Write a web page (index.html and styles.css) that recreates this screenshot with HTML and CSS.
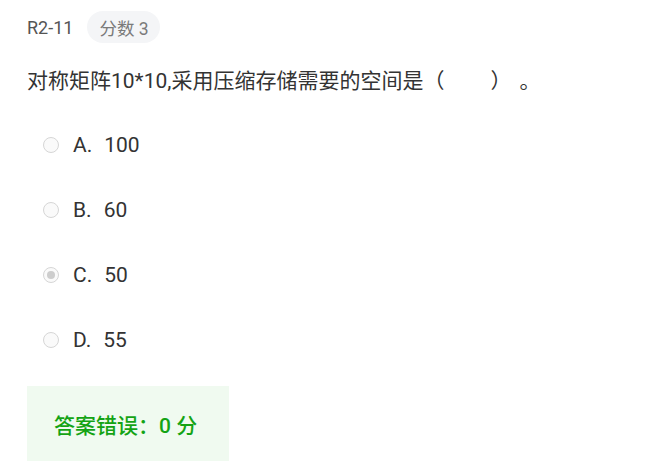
FILE: index.html
```html
<!DOCTYPE html>
<html lang="zh">
<head>
<meta charset="utf-8">
<link rel="stylesheet" href="styles.css">
</head>
<body>
<div class="problem">
  <div class="header">
    <span class="pid">R2-11</span>
    <span class="score">分数 3</span>
  </div>
  <div class="question">对称矩阵10*10,采用压缩存储需要的空间是（<span class="blank"></span>）<span class="gap"></span>。</div>
  <ul class="options">
    <li class="option"><span class="radio"></span><span class="label">A.<span class="sep"></span>100</span></li>
    <li class="option"><span class="radio"></span><span class="label">B.<span class="sep"></span>60</span></li>
    <li class="option"><span class="radio checked"></span><span class="label">C.<span class="sep"></span>50</span></li>
    <li class="option"><span class="radio"></span><span class="label">D.<span class="sep"></span>55</span></li>
  </ul>
  <div class="result">答案错误：0 分</div>
</div>
</body>
</html>
```
FILE: styles.css
```css
html, body {
  margin: 0;
  padding: 0;
  background: #fff;
}
body {
  font-family: Roboto, "Noto Sans CJK SC", sans-serif;
  color: #333;
}
.problem {
  padding: 11px 0 0 27px;
}
.header {
  display: flex;
  align-items: center;
  gap: 14px;
  height: 32px;
}
.pid {
  font-size: 18px;
  color: #555;
}
.score {
  display: inline-flex;
  align-items: center;
  height: 32px;
  padding: 0 11px 0 12px;
  border-radius: 16px;
  background: #f4f5f7;
  color: #7a7a7a;
  font-size: 17.5px;
}
.question {
  margin-top: 23px;
  font-size: 21px;
  line-height: 30px;
  color: #333;
}
.blank {
  display: inline-block;
  width: 46px;
}
.gap {
  display: inline-block;
  width: 8px;
}
.options {
  list-style: none;
  margin: 16px 0 0 0;
  padding: 0 0 0 16px;
}
.option {
  display: flex;
  align-items: center;
  height: 65px;
  gap: 14px;
}
.radio {
  width: 14px;
  height: 14px;
  border: 1px solid #d6d6d6;
  border-radius: 50%;
  background: #fafafa;
  position: relative;
  flex: none;
}
.radio.checked::after {
  content: "";
  position: absolute;
  left: 3px;
  top: 3px;
  width: 8px;
  height: 8px;
  border-radius: 50%;
  background: #cdcdcd;
}
.label {
  font-size: 21px;
  color: #333;
}
.sep {
  display: inline-block;
  width: 12px;
}
.result {
  margin-top: 14px;
  width: 202px;
  height: 75px;
  box-sizing: border-box;
  padding-left: 27px;
  display: flex;
  align-items: center;
  background: #f0faf0;
  color: #14a314;
  font-size: 21px;
  font-weight: 500;
}
```
